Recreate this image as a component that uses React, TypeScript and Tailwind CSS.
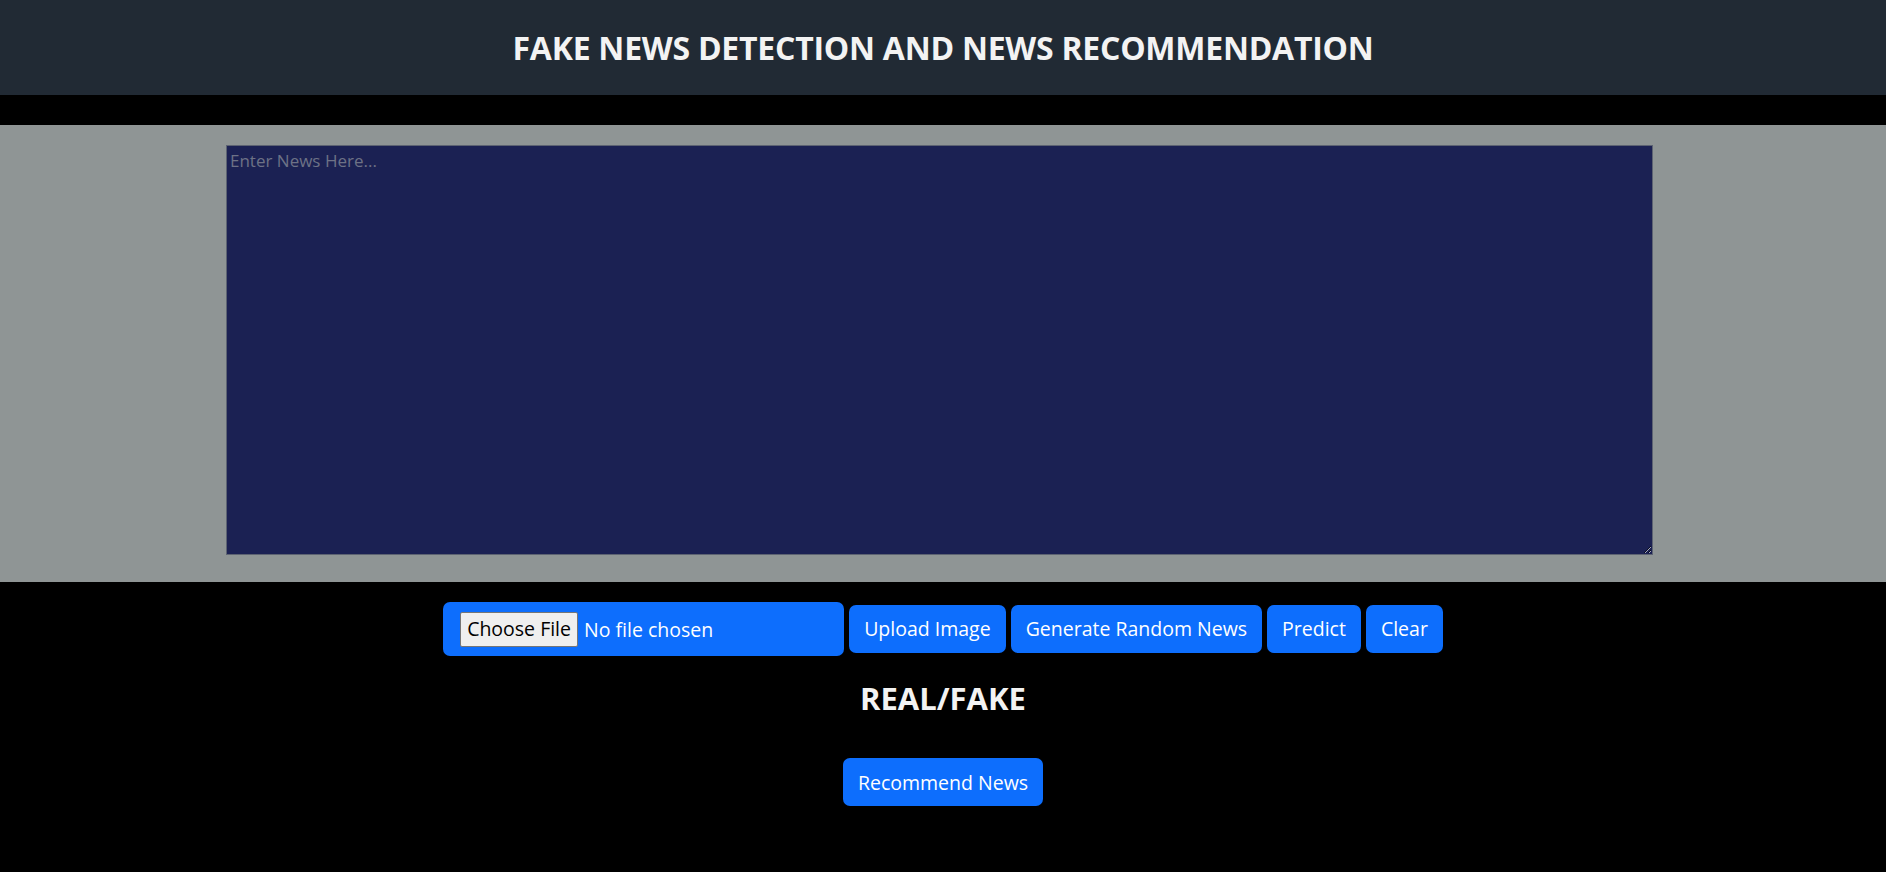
import React, { useState } from "react";

const buttons = ["Upload Image", "Generate Random News", "Predict", "Clear"];

const App = () => {
  const [news, setNews] = useState("");

  return (
    <div className="min-h-screen bg-black font-['Open_Sans',sans-serif] pb-[40px]">
      {/* top bar */}
      <header className="h-[95px] bg-[#212a34] flex items-center justify-center">
        <h1 className="text-[32px] font-bold text-[#f3f3f3] tracking-[-0.25px]">
          FAKE NEWS DETECTION AND NEWS RECOMMENDATION
        </h1>
      </header>

      {/* news input */}
      <section className="mt-[30px] bg-[#8f9595] pt-[20px] pb-[27px]">
        <textarea
          value={news}
          onChange={(e) => setNews(e.target.value)}
          placeholder="Enter News Here..."
          className="block ml-[226px] w-[1427px] h-[410px] bg-[#1b2153] border border-[#5d6372] px-[3px] py-[2px] text-[17px] text-white placeholder:text-[#6d7286] outline-none"
        />
      </section>

      {/* actions */}
      <div className="mt-[20px] flex items-center justify-center gap-[5px]">
        <input
          type="file"
          className="w-[401px] py-[9.5px] rounded-[7px] bg-[#0d6efd] text-white text-[19.5px] pl-[17px] pr-[15px] file:bg-[#efefef] file:text-black file:border file:border-[#767676] file:rounded-[2px] file:px-[6px] file:h-[35px] file:mr-[6px] file:text-[19.5px]"
        />
        {buttons.map((label) => (
          <button
            key={label}
            className="h-[48px] px-[15px] rounded-[7px] bg-[#0d6efd] text-white text-[19.5px]"
          >
            {label}
          </button>
        ))}
      </div>

      <h2 className="mt-[24px] text-center text-[31px] font-bold text-[#f3f3f3] leading-[1.2]">
        REAL/FAKE
      </h2>

      <div className="mt-[41px] flex justify-center">
        <button className="h-[48px] px-[15px] rounded-[7px] bg-[#0d6efd] text-white text-[19.5px]">
          Recommend News
        </button>
      </div>
    </div>
  );
};

export default App;
